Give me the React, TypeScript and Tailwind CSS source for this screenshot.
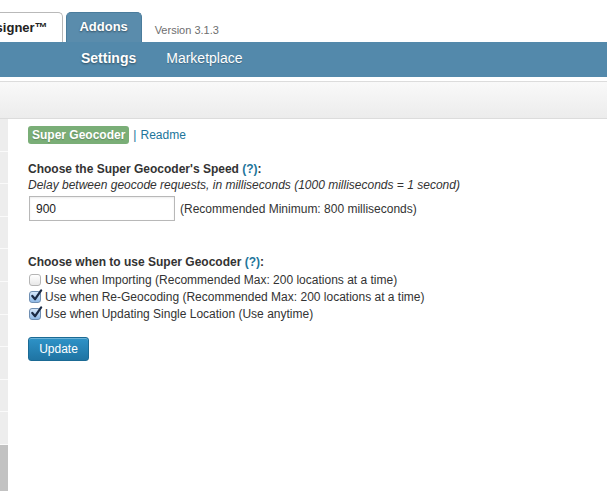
import React from "react";

const font = { fontFamily: '"Liberation Sans", Arial, sans-serif' };

const Check = ({ checked }: { checked: boolean }) => (
  <span
    className={
      "relative inline-block w-[12px] h-[12px] rounded-[3px] border shrink-0 " +
      (checked
        ? "border-[#6f8fb3] bg-gradient-to-b from-[#d6e8fb] to-[#8fb9e6]"
        : "border-[#b5b5b5] bg-gradient-to-b from-white to-[#e8e8e8]")
    }
  >
    {checked && (
      <svg
        viewBox="0 0 14 14"
        className="absolute left-[0px] top-[-3px] w-[13px] h-[13px]"
      >
        <path
          d="M2.5 7.5 L5.5 11 L12 1.5"
          fill="none"
          stroke="#1a2a44"
          strokeWidth="2.4"
          strokeLinecap="round"
          strokeLinejoin="round"
        />
      </svg>
    )}
  </span>
);

const options = [
  { label: "Use when Importing (Recommended Max: 200 locations at a time)", checked: false },
  { label: "Use when Re-Geocoding (Recommended Max: 200 locations at a time)", checked: true },
  { label: "Use when Updating Single Location (Use anytime)", checked: true },
];

export default function App() {
  return (
    <div className="w-[607px] h-[491px] overflow-hidden bg-white flex flex-col" style={font}>
      {/* tabs */}
      <div className="h-[42px] flex items-end shrink-0">
        <div className="ml-[-30px] h-[30px] pl-[8px] pr-[14px] flex items-center bg-white border border-b-0 border-[#b9b9b9] rounded-tr-[5px] text-[13px] font-bold text-[#222]">
          Designer™
        </div>
        <div className="ml-[3px] h-[30px] w-[76px] flex items-center justify-center pb-[1px] rounded-t-[5px] bg-[#5a8cac] border border-b-0 border-[#4a7c9c] text-[13px] font-bold text-white [text-shadow:0_1px_2px_rgba(0,0,0,0.45)]">
          Addons
        </div>
        <div className="ml-[13px] h-[30px] flex items-center pt-[6px] text-[11px] text-[#6e6e6e]">
          Version 3.1.3
        </div>
      </div>

      {/* blue nav */}
      <div className="h-[35px] bg-[#5389ab] flex items-center pb-[3px] pl-[81px] gap-[30px] text-[14px] text-white shrink-0">
        <span className="font-bold [text-shadow:0_1px_2px_rgba(0,0,0,0.45)]">Settings</span>
        <span className="[text-shadow:0_1px_1px_rgba(0,0,0,0.25)]">Marketplace</span>
      </div>

      {/* toolbar strip */}
      <div className="mt-[4px] h-[38px] border-y border-[#dcdcdc] bg-gradient-to-b from-[#f9f9f9] to-[#ececec] shrink-0" />

      {/* body */}
      <div className="flex flex-1 min-h-0">
        <div className="w-[8px] flex flex-col bg-[#c2c2c2]">
          {Array.from({ length: 10 }).map((_, i) => (
            <div key={i} className="h-[32.6px] bg-[#ededed] border-b border-[#fafafa]" />
          ))}
        </div>

        <div className="pl-[20px] pt-[7px] text-[12px] leading-[16px] text-[#333]">
          <div className="flex items-center">
            <span className="h-[18px] px-[4px] flex items-center rounded-[3px] bg-[#7aae77] text-white font-bold [text-shadow:0_1px_1px_rgba(0,0,0,0.2)]">
              Super Geocoder
            </span>
            <span className="ml-[4px] text-[#21759b]">|</span>
            <a className="ml-[4px] text-[#21759b]">Readme</a>
          </div>

          <div className="mt-[17px] font-bold">
            Choose the Super Geocoder's Speed <span className="text-[#21759b]">(?)</span>:
          </div>
          <div className="italic">
            Delay between geocode requests, in milliseconds (1000 milliseconds = 1 second)
          </div>
          <div className="mt-[3px] flex items-center">
            <div className="ml-[1px] w-[146px] h-[25px] border border-[#b8b8b8] shadow-[inset_0_1px_2px_rgba(0,0,0,0.08)] flex items-center pl-[6px] text-[#222]">
              900
            </div>
            <span className="ml-[5px]">(Recommended Minimum: 800 milliseconds)</span>
          </div>

          <div className="mt-[33px] font-bold">
            Choose when to use Super Geocoder <span className="text-[#21759b]">(?)</span>:
          </div>
          <div className="mt-[1px]">
            {options.map((o) => (
              <div key={o.label} className="h-[17px] flex items-center pl-[1px]">
                <Check checked={o.checked} />
                <span className="ml-[4px]">{o.label}</span>
              </div>
            ))}
          </div>

          <button className="mt-[15px] w-[61px] h-[24px] rounded-[3px] border border-[#1b6a94] bg-gradient-to-b from-[#2e93c8] to-[#1f74a3] text-white text-[12px] shadow-[inset_0_1px_0_rgba(255,255,255,0.3)]">
            Update
          </button>
        </div>
      </div>
    </div>
  );
}
